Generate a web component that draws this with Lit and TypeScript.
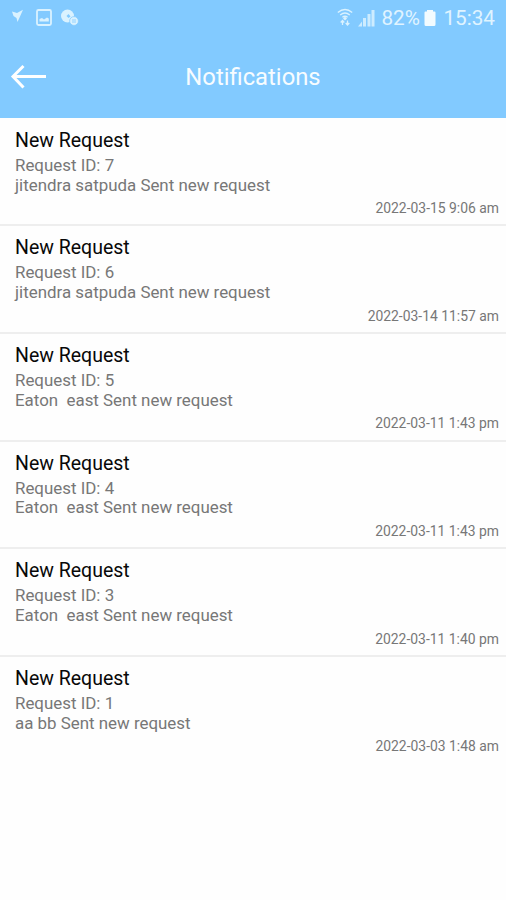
import { LitElement, html, css } from "lit";
import { customElement, property } from "lit/decorators.js";

interface Notice { id: number; message: string; date: string; }

const notices: Notice[] = [
  { id: 7, message: "jitendra satpuda Sent new request", date: "2022-03-15 9:06 am" },
  { id: 6, message: "jitendra satpuda Sent new request", date: "2022-03-14 11:57 am" },
  { id: 5, message: "Eaton  east Sent new request", date: "2022-03-11 1:43 pm" },
  { id: 4, message: "Eaton  east Sent new request", date: "2022-03-11 1:43 pm" },
  { id: 3, message: "Eaton  east Sent new request", date: "2022-03-11 1:40 pm" },
  { id: 1, message: "aa bb Sent new request", date: "2022-03-03 1:48 am" },
];

@customElement("status-bar")
class StatusBar extends LitElement {
  static styles = css`
    :host { display: flex; justify-content: space-between; height: 36px; padding: 0 11px 0 9px; color: #e0f4ff; }
    .group { display: flex; align-items: center; height: 36px; }
    svg { display: block; flex: none; }
    .text { font-size: 20.7px; line-height: 36px; white-space: nowrap; }
    .percent { width: 39px; margin-left: 6px; }
    .battery { margin: 0 7px 0 4px; }
  `;
  render() {
    return html`
      <div class="group">
        <svg width="72" height="36" viewBox="0 0 72 36" fill="none" stroke="#daf2ff">
          <path d="M3 11.5L8 13L14 9.8L11 16.5L8.5 22L7.5 18L4.5 16Z" fill="#daf2ff" stroke="none"/>
          <rect x="28" y="10" width="14" height="15" rx="1.5" stroke-width="1.8"/>
          <path d="M30.5 21.5V19L33 18L35 19.5L38 17.5L39.8 18.5V21.5Z" fill="#daf2ff" stroke="none"/>
          <circle cx="58.5" cy="16" r="6.5" fill="#daf2ff" stroke="none"/>
          <path d="M57.5 16L59.5 14L61.5 16.5L59.5 18Z" fill="#82caff" stroke="none"/>
          <circle cx="65" cy="21" r="4.4" fill="#daf2ff" stroke="#82caff" stroke-width=".7"/>
          <path d="M64 19V23M66 19V23" stroke="#82caff" stroke-width=".8"/>
        </svg>
      </div>
      <div class="group">
        <svg width="38" height="36" viewBox="0 0 38 36" fill="none" stroke="#daf2ff" stroke-width="1.3">
          <path d="M.8 12.5Q8 6.5 15.2 12.5M3.2 15Q8 11 12.8 15M5.4 17.3Q8 15.2 10.6 17.3"/>
          <path d="M8 16.5L10 18.5L8 20.5L6 18.5Z" fill="#daf2ff" stroke="none"/>
          <path d="M5.5 25V20.8M3.7 22.5L5.5 20.5L7.3 22.5M10.5 20.5V24.5M8.7 23L10.5 25L12.3 23"/>
          <path d="M21 26.5L25 21.5V26.5ZM26 26.5V18H29V26.5ZM30.5 26.5V14H33.5V26.5ZM34.5 26.5V10H37.5V26.5Z" fill="#cdecff" stroke="none"/>
        </svg>
        <span class="text percent">82%</span>
        <svg class="battery" width="12" height="36" viewBox="0 0 12 36"><path d="M3 10H9V11.5H10.5Q11.5 11.5 11.5 12.5V24.5Q11.5 26 10 26H2Q.5 26 .5 24.5V12.5Q.5 11.5 1.5 11.5H3Z" fill="#f2fbff"/></svg>
        <span class="text">15:34</span>
      </div>`;
  }
}

@customElement("app-header")
class AppHeader extends LitElement {
  static styles = css`
    :host { display: grid; grid-template-columns: 60px 1fr 60px; align-items: center; height: 82.4px; }
    svg { display: block; margin-left: 10px; }
    h1 { margin: 0; text-align: center; font-size: 23.8px; font-weight: 400; line-height: 82px; color: #f7fcff; }
  `;
  render() {
    return html`
      <svg width="38" height="28" viewBox="0 0 38 28" fill="none" stroke="#fff" stroke-width="3"><path d="M36 13.5H3M13.5 3L3 13.5L13.5 24.5"/></svg>
      <h1>Notifications</h1>`;
  }
}

@customElement("notice-row")
class NoticeRow extends LitElement {
  @property({ attribute: false }) notice!: Notice;
  static styles = css`
    :host { display: block; box-sizing: border-box; height: 107.6px; padding: 10px 7px 0 15px; border-bottom: 2px solid #eee; }
    :host(:last-child) { border-bottom-color: transparent; }
    .title { font-size: 19.5px; line-height: 24px; color: #080808; }
    .line { font-size: 16.9px; line-height: 19.7px; color: #777; white-space: pre; }
    .id { margin-top: 3px; }
    .date { margin-top: 5px; font-size: 13.9px; line-height: 17px; text-align: right; color: #777; }
  `;
  render() {
    return html`
      <div class="title">New Request</div>
      <div class="line id">Request ID: ${this.notice.id}</div>
      <div class="line">${this.notice.message}</div>
      <div class="date">${this.notice.date}</div>`;
  }
}

@customElement("app-root")
class AppRoot extends LitElement {
  static styles = css`
    :host { display: block; min-height: 900px; background: #fefefe; font-family: Roboto, "Liberation Sans", sans-serif; }
    .top { background: #82caff; }
    main { padding-top: .5px; }
  `;
  render() {
    return html`
      <div class="top"><status-bar></status-bar><app-header></app-header></div>
      <main>${notices.map((n) => html`<notice-row .notice=${n}></notice-row>`)}</main>`;
  }
}
